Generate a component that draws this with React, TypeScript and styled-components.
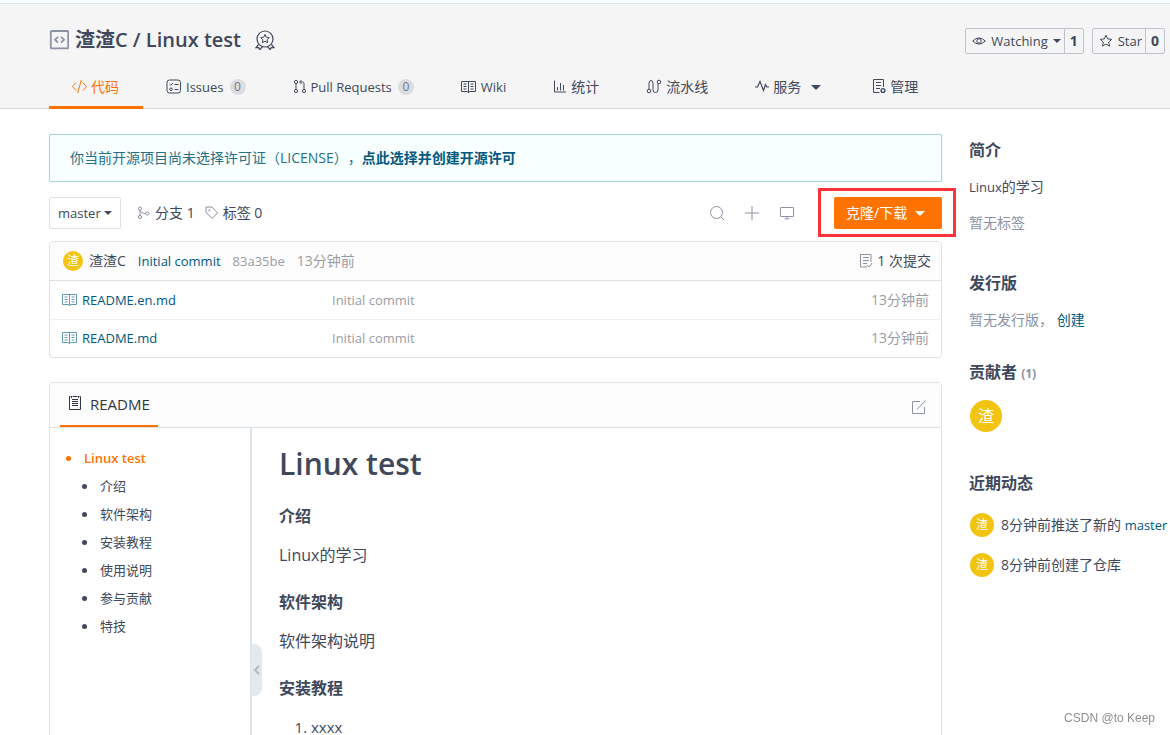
import React from "react";
import styled, { createGlobalStyle } from "styled-components";

const color = {
  text: "#40485b",
  muted: "#8c92a4",
  faint: "#9b9ca3",
  link: "#005980",
  orange: "#fe7300",
  line: "#dce3e8",
  softLine: "#eff2f5",
  panel: "#fcfcfc",
  yellow: "#f1c40f",
};

const GlobalStyle = createGlobalStyle`
  *, *::before, *::after { box-sizing: border-box; }
  html { scrollbar-width: none; }
  body {
    margin: 0;
    background: #fff;
    color: ${color.text};
    font-family: "Open Sans", "Noto Sans CJK SC", sans-serif;
    font-size: 14px;
    line-height: 24px;
    overflow-x: hidden;
    text-spacing-trim: space-all;
  }
  a { color: inherit; text-decoration: none; }
  button, select { font: inherit; color: inherit; }
  h1, h2, h3, p, ul, ol { margin: 0; padding: 0; }
`;

/* ---------- icons ---------- */

const Svg = styled.svg`
  flex: none;
  display: block;
  fill: none;
  stroke: currentColor;
  stroke-width: 1;
`;

type IconProps = { w?: number; h?: number; children?: React.ReactNode };
const Icon = ({ w = 16, h = 16, children }: IconProps) => (
  <Svg width={w} height={h} viewBox={`0 0 ${w} ${h}`} aria-hidden="true">
    {children}
  </Svg>
);

const RepoIcon = () => (
  <Icon w={20} h={20}>
    <rect x="1.800" y="1" width="17.400" height="17.400" rx="1" strokeWidth="1.800" />
    <path d="M9 6.800 6 9.700l3 2.900M12 6.800l3 2.900-3 2.900" strokeWidth="1.800" />
  </Icon>
);
const MedalIcon = () => (
  <Icon w={20} h={20}>
    <circle cx="10" cy="9" r="8" strokeWidth="1.200" />
    <path d="m10 4.500 1.300 2.700 3 .4-2.200 2.100.6 3-2.700-1.500-2.700 1.500.6-3-2.200-2.100 3-.4z" />
    <path d="M3.500 14.500 1 17.600l2.800-.1.900 2.200 3-3M16.500 14.500l2.500 3.100-2.800-.1-.9 2.200-3-3" strokeWidth="1.200" />
  </Icon>
);
const CodeIcon = () => (
  <Icon w={15}>
    <path d="M4 3.500.5 7.500l3.500 4M11 3.500l3.500 4-3.500 4M9.300 1 5.700 14" />
  </Icon>
);
const IssuesIcon = () => (
  <Icon>
    <rect x="1" y="1" width="13.500" height="13" rx="2.500" />
    <path d="m3.500 5 1.300 1.200L7 3.800M8.500 5.500h4M8.500 10.500h4" />
    <circle cx="5" cy="10.300" r="1.300" />
  </Icon>
);
const PullIcon = () => (
  <Icon w={14}>
    <circle cx="3" cy="3" r="1.600" />
    <circle cx="3" cy="12" r="1.600" />
    <circle cx="11" cy="12" r="1.600" />
    <path d="M3 4.600v5.800M11 10.400V4.500q0-1.500-1.500-1.500H7M8.500 1 6.500 3l2 2" />
  </Icon>
);
const BookIcon = () => (
  <Icon>
    <path d="M.5 2.500h14v10H9l-1.500 1-1.500-1H.5zM7.500 2.500v11M2.500 5h3M2.500 7.500h3M2.500 10h3M9.500 5h3M9.500 7.500h3M9.500 10h3" />
  </Icon>
);
const ChartIcon = () => (
  <Icon w={14}>
    <path d="M1.500 1.500v11.500H13M4.500 11.500V8M7.500 11.500V4M10.500 11.500V6" />
  </Icon>
);
const PipeIcon = () => (
  <Icon>
    <circle cx="3" cy="12" r="1.800" />
    <circle cx="13" cy="3" r="1.800" />
    <path d="M3 10.200V4q0-2.500 2-2.500T7 4v7q0 2.500 2.500 2.500T12 11V4.800" />
  </Icon>
);
const PulseIcon = () => (
  <Icon w={14}>
    <path d="M0 8h2.500L5 2.500l3.500 9 2-6L11.800 8H14" strokeWidth="1.200" />
  </Icon>
);
const ManageIcon = () => (
  <Icon w={14}>
    <path d="M11.500 8V.500h-10v13h6M4 3.500h5M4 6.500h5M4 9.500h4" />
    <circle cx="11" cy="11.500" r="1.900" strokeWidth="1.400" />
  </Icon>
);
const EyeIcon = () => (
  <Icon w={14} h={14}>
    <path d="M.7 7Q7 .8 13.300 7 7 13.200.7 7z" />
    <circle cx="7" cy="7" r="2.200" />
  </Icon>
);
const StarIcon = () => (
  <Icon w={14} h={14}>
    <path d="m7 1.200 1.700 3.700 4 .5-3 2.700.8 4L7 10.100l-3.500 2 .8-4-3-2.700 4-.5z" />
  </Icon>
);
const BranchIcon = () => (
  <Icon w={14} h={14}>
    <circle cx="3" cy="2.700" r="1.600" />
    <circle cx="3" cy="11" r="1.600" />
    <circle cx="10.500" cy="7.500" r="1.600" />
    <path d="M3 4.300v5.100M3 4.300q.6 3.200 5.900 3.200" />
  </Icon>
);
const TagIcon = () => (
  <Icon w={14} h={14}>
    <path d="M1 1h6l5.500 6L7.300 12.300 1 6.500z" />
    <circle cx="4.300" cy="4.300" r=".6" />
  </Icon>
);
const SearchIcon = () => (
  <Icon>
    <circle cx="7.500" cy="7.500" r="6" />
    <path d="m12 12 3 3" />
  </Icon>
);
const PlusIcon = () => (
  <Icon>
    <path d="M8 1v14M1 8h14" />
  </Icon>
);
const ScreenIcon = () => (
  <Icon>
    <rect x="1.500" y="2.500" width="13" height="9" rx=".5" />
    <path d="M8 11.500v2M5.500 13.800h5" />
  </Icon>
);
const LogIcon = () => (
  <Icon w={14}>
    <path d="M12 9V1.500H1.500v12.500H8M4 4.500h6M4 7.500h6M4 10.500h4M8 12l2.200 2L13 10" />
  </Icon>
);
const DocIcon = () => (
  <Icon w={14}>
    <path d="M2.500.5h-1v13h11V.5h-1M4.500.5h5M4 3.500h6M4 5.500h6M4 7.500h6M4 9.500h6M3.500 0v2M10.500 0v2" />
  </Icon>
);
const EditIcon = () => (
  <Icon>
    <path d="M9 2.500H1.500v12h12V8M6 10.500 14.500 1.500" />
  </Icon>
);
const ChevronIcon = () => (
  <Icon w={8} h={12}>
    <path d="M6 2 2 6l4 4" strokeWidth="2" />
  </Icon>
);

const Caret = styled.span`
  flex: none;
  border: 4px solid transparent;
  border-top-color: currentColor;
  border-bottom-width: 0;
`;
const WideCaret = styled(Caret)`
  border-width: 5px 5px 0;
  margin-left: 6px;
`;

/* Text in Latin letters runs one size below the Chinese text around it. */
const Latin = styled.span`
  font-size: 13px;
`;

/* ---------- header ---------- */

const TopStrip = styled.div`
  height: 4px;
  background: #f6ffff;
  border-bottom: 1px solid #dde6e8;
`;
const Header = styled.header`
  background: #f5f5f5;
  border-bottom: 1px solid #d9d9d9;
  padding: 19px 5px 0 49px;
`;
const TitleRow = styled.div`
  display: flex;
  align-items: center;
  justify-content: space-between;
  height: 34px;
`;
const Title = styled.h1`
  display: flex;
  align-items: center;
  gap: 6px;
  font-size: 20px;
  line-height: 32px;
  font-weight: 600;
  white-space: nowrap;
`;
const Tint = styled.span<{ $c: string }>`
  display: flex;
  color: ${(p) => p.$c};
`;
const MedalSlot = styled.span`
  display: flex;
  margin-left: 8px;
`;
const Actions = styled.div`
  display: flex;
  gap: 8px;
  margin-top: 2px;
`;
const ActionGroup = styled.div`
  display: flex;
  height: 26px;
  border: 1px solid #c0c4d0;
  border-radius: 2px;
`;
const ActionButton = styled.button`
  display: flex;
  align-items: center;
  gap: 5px;
  padding: 0 3px 0 6px;
  border: 0;
  background: none;
  font-size: 13px;
  white-space: nowrap;
`;
const ActionCount = styled.a`
  display: flex;
  align-items: center;
  justify-content: center;
  width: 19px;
  border-left: 1px solid #c0c4d0;
  font-weight: 700;
`;
const Tabs = styled.nav`
  display: flex;
  height: 44px;
  margin: 8px 0 -1px;
`;
const Tab = styled.a<{ $active?: boolean; $wide?: boolean }>`
  display: flex;
  align-items: center;
  gap: 4px;
  padding: 0 24px 0 23px;
  margin-right: ${(p) => (p.$wide ? 4 : 0)}px;
  white-space: nowrap;
  color: ${(p) => (p.$active ? color.orange : color.text)};
  box-shadow: ${(p) => (p.$active ? `inset 0 -3px ${color.orange}` : "none")};
`;
const Pill = styled.span`
  min-width: 16px;
  height: 16px;
  margin-left: 2px;
  border-radius: 8px;
  background: #dcdde0;
  color: #6b7a99;
  font-size: 12px;
  line-height: 16px;
  text-align: center;
`;

/* ---------- page ---------- */

const Columns = styled.div`
  display: flex;
  align-items: flex-start;
  gap: 27px;
  padding: 25px 0 0 49px;
`;
const Main = styled.main`
  flex: 1;
  min-width: 0;
`;
const Notice = styled.div`
  display: flex;
  align-items: center;
  height: 48px;
  padding: 0 20px;
  border: 1px solid #a9d5de;
  border-radius: 2px;
  background: #f8ffff;
  box-shadow: 0 0 1px #a9d5de;
  color: #276f86;
  white-space: nowrap;
`;
const NoticeLink = styled.a`
  color: ${color.link};
  font-weight: 700;
`;
const Toolbar = styled.div`
  display: flex;
  align-items: center;
  justify-content: space-between;
  margin: 15px 0 12px;
`;
const ToolGroup = styled.div<{ $gap: number }>`
  display: flex;
  align-items: center;
  gap: ${(p) => p.$gap}px;
`;
const BranchBox = styled.label`
  display: grid;
  align-items: center;
  width: 72px;
  height: 32px;
  margin-right: 6px;
  border: 1px solid ${color.line};
  border-radius: 2px;
  > * { grid-area: 1 / 1; }
  > span { justify-self: end; margin-right: 8px; pointer-events: none; }
`;
const BranchSelect = styled.select`
  appearance: none;
  width: 100%;
  height: 30px;
  padding: 0 8px;
  border: 0;
  background: none;
  font-size: 13px;
`;
const IconLink = styled.a`
  display: flex;
  align-items: center;
  gap: 4px;
  white-space: nowrap;
`;
const ToolButton = styled.button`
  display: flex;
  padding: 0;
  border: 0;
  background: none;
  color: ${color.muted};
`;
const CloneSlot = styled.div`
  position: relative;
  margin-left: 20px;
  &::after {
    content: "";
    position: absolute;
    inset: -9px -14px -8px -16px;
    border: 3px solid #fb3338;
    pointer-events: none;
  }
`;
const CloneButton = styled.button`
  display: flex;
  align-items: center;
  justify-content: space-between;
  width: 108px;
  height: 32px;
  padding: 0 17px 0 12px;
  border: 0;
  border-radius: 2px;
  background: ${color.orange};
  color: #fff;
`;
const Panel = styled.section`
  border: 1px solid ${color.line};
  border-radius: 4px;
  overflow: hidden;
`;
const CommitBar = styled.div`
  display: flex;
  align-items: center;
  height: 39px;
  padding: 0 10px 0 13px;
  gap: 12px;
  background: ${color.panel};
  border-bottom: 1px solid ${color.line};
  white-space: nowrap;
`;
const Author = styled.a`
  display: flex;
  align-items: center;
  gap: 6px;
`;
const PlainLink = styled.a`
  color: ${color.link};
`;
const LatinLink = styled(PlainLink)`
  font-size: 13px;
`;
const Faint = styled.span`
  color: ${color.faint};
`;
const FaintLatin = styled(Faint)`
  font-size: 13px;
`;
const PushRight = styled.div`
  margin-left: auto;
`;
const Avatar = styled.span<{ $size: number }>`
  flex: none;
  width: ${(p) => p.$size}px;
  height: ${(p) => p.$size}px;
  border-radius: 50%;
  background: ${color.yellow};
  color: #fff;
  font-size: ${(p) => (p.$size > 24 ? 16 : 12)}px;
  line-height: ${(p) => p.$size}px;
  text-align: center;
`;
const FileTable = styled.table`
  width: 100%;
  border-collapse: collapse;
  table-layout: fixed;
  td {
    height: 38px;
    padding: 0 12px;
    color: ${color.faint};
  }
  td:first-child { width: 282px; padding-right: 0; font-size: 13px; }
  td:nth-child(2) { padding-left: 0; font-size: 13px; }
  td:last-child { width: 120px; text-align: right; }
  tr + tr td { border-top: 1px solid ${color.softLine}; }
`;
const FileLink = styled(IconLink)`
  color: ${color.link};
  svg { opacity: 0.6; }
`;
const ReadmePanel = styled(Panel)`
  margin-top: 24px;
`;
const ReadmeBar = styled.div`
  display: flex;
  align-items: center;
  justify-content: space-between;
  height: 45px;
  padding: 4px 14px 0 10px;
  background: ${color.panel};
  border-bottom: 1px solid ${color.line};
`;
const ReadmeTitle = styled.h2`
  display: flex;
  align-items: center;
  gap: 8px;
  height: 40px;
  padding: 0 8px 4px;
  border-bottom: 2px solid ${color.orange};
  color: #303643;
  font-size: 15px;
  font-weight: 400;
`;
const ReadmeBody = styled.div`
  display: flex;
  min-height: 400px;
`;
const Toc = styled.nav`
  position: relative;
  flex: none;
  width: 202px;
  padding: 16px 0 0 16px;
  border-right: 2px solid ${color.line};
  font-size: 13px;
  line-height: 28px;
  ul { list-style: none; }
  ul ul { padding-left: 16px; }
`;
const TocLink = styled.a<{ $current?: boolean }>`
  display: flex;
  align-items: center;
  gap: 13px;
  height: 28px;
  color: ${(p) => (p.$current ? color.orange : color.text)};
  font-weight: ${(p) => (p.$current ? 600 : 400)};
  &::before {
    content: "";
    width: 5px;
    height: 5px;
    border-radius: 50%;
    background: currentColor;
  }
`;
const TocToggle = styled.button`
  position: absolute;
  top: 216px;
  right: -12px;
  display: flex;
  align-items: center;
  justify-content: center;
  width: 11px;
  height: 52px;
  padding: 0;
  border: 0;
  border-radius: 0 8px 8px 0;
  background: #e3e9ed;
  color: #b3b9c5;
`;
const Article = styled.article`
  flex: 1;
  padding: 16px 27px 40px;
  font-size: 16px;
  h1 { font-size: 30px; line-height: 40px; font-weight: 600; margin-bottom: 20px; }
  h3 { font-size: 16px; line-height: 24px; font-weight: 700; }
  p { line-height: 24px; margin: 15px 0 23px; }
  ol { padding-left: 32px; margin-top: 15px; font-size: 15px; }
`;

/* ---------- sidebar ---------- */

const Side = styled.aside`
  flex: none;
  width: 201px;
  padding-top: 4px;
  white-space: nowrap;
`;
const SideBlock = styled.section<{ $space: number }>`
  margin-bottom: ${(p) => p.$space}px;
  h3 { font-size: 16px; line-height: 24px; margin-bottom: 13px; }
  p + p { margin-top: 12px; }
  small { font-size: 12px; color: ${color.muted}; }
`;
const Muted = styled.p`
  color: ${color.muted};
`;
const AvatarRow = styled.div`
  display: flex;
  padding: 1px 0 0 1px;
`;
const Events = styled.div`
  display: grid;
  gap: 16px;
  padding: 5px 0 0 1px;
`;
const Event = styled.div`
  display: flex;
  align-items: center;
  gap: 7px;
`;
const Watermark = styled.div`
  position: fixed;
  right: 15px;
  bottom: 5px;
  color: #8f8f8f;
  font: 12px/24px "Liberation Sans", Arial, sans-serif;
`;

const files = ["README.en.md", "README.md"];
const sections = ["介绍", "软件架构", "安装教程", "使用说明", "参与贡献", "特技"];

export default function App() {
  return (
    <>
      <GlobalStyle />
      <TopStrip />
      <Header>
        <TitleRow>
          <Title>
            <Tint $c={color.muted}><RepoIcon /></Tint>
            <a href="#repo">渣渣C / Linux test</a>
            <MedalSlot><MedalIcon /></MedalSlot>
          </Title>
          <Actions>
            <ActionGroup>
              <ActionButton type="button"><EyeIcon />Watching<Caret /></ActionButton>
              <ActionCount href="#watchers">1</ActionCount>
            </ActionGroup>
            <ActionGroup>
              <ActionButton type="button"><StarIcon />Star</ActionButton>
              <ActionCount href="#stars">0</ActionCount>
            </ActionGroup>
          </Actions>
        </TitleRow>
        <Tabs>
          <Tab href="#code" $active><CodeIcon />代码</Tab>
          <Tab href="#issues"><IssuesIcon /><Latin>Issues</Latin><Pill>0</Pill></Tab>
          <Tab href="#pulls"><PullIcon /><Latin>Pull Requests</Latin><Pill>0</Pill></Tab>
          <Tab href="#wiki"><BookIcon /><Latin>Wiki</Latin></Tab>
          <Tab href="#stats"><ChartIcon />统计</Tab>
          <Tab href="#pipelines"><PipeIcon />流水线</Tab>
          <Tab href="#services" $wide><PulseIcon />服务<WideCaret /></Tab>
          <Tab href="#manage"><ManageIcon />管理</Tab>
        </Tabs>
      </Header>

      <Columns>
        <Main>
          <Notice>
            你当前开源项目尚未选择许可证（LICENSE），
            <NoticeLink href="#license">点此选择并创建开源许可</NoticeLink>
          </Notice>

          <Toolbar>
            <ToolGroup $gap={10}>
              <BranchBox>
                <BranchSelect aria-label="分支" defaultValue="master">
                  <option>master</option>
                </BranchSelect>
                <Caret />
              </BranchBox>
              <IconLink href="#branches"><Tint $c={color.muted}><BranchIcon /></Tint>分支 1</IconLink>
              <IconLink href="#tags"><Tint $c={color.muted}><TagIcon /></Tint>标签 0</IconLink>
            </ToolGroup>
            <ToolGroup $gap={19}>
              <ToolButton type="button" aria-label="搜索"><SearchIcon /></ToolButton>
              <ToolButton type="button" aria-label="新建"><PlusIcon /></ToolButton>
              <ToolButton type="button" aria-label="Web IDE"><ScreenIcon /></ToolButton>
              <CloneSlot>
                <CloneButton type="button">克隆/下载<WideCaret /></CloneButton>
              </CloneSlot>
            </ToolGroup>
          </Toolbar>

          <Panel>
            <CommitBar>
              <Author href="#user"><Avatar $size={20}>渣</Avatar>渣渣C</Author>
              <LatinLink href="#commit">Initial commit</LatinLink>
              <FaintLatin>83a35be</FaintLatin>
              <Faint>13分钟前</Faint>
              <PushRight>
                <IconLink href="#commits"><Tint $c={color.muted}><LogIcon /></Tint>1 次提交</IconLink>
              </PushRight>
            </CommitBar>
            <FileTable>
              <tbody>
                {files.map((name) => (
                  <tr key={name}>
                    <td><FileLink href={`#${name}`}><BookIcon />{name}</FileLink></td>
                    <td>Initial commit</td>
                    <td>13分钟前</td>
                  </tr>
                ))}
              </tbody>
            </FileTable>
          </Panel>

          <ReadmePanel>
            <ReadmeBar>
              <ReadmeTitle><DocIcon />README</ReadmeTitle>
              <ToolButton type="button" aria-label="编辑"><EditIcon /></ToolButton>
            </ReadmeBar>
            <ReadmeBody>
              <Toc>
                <ul>
                  <li>
                    <TocLink href="#top" $current>Linux test</TocLink>
                    <ul>
                      {sections.map((s) => (
                        <li key={s}><TocLink href={`#${s}`}>{s}</TocLink></li>
                      ))}
                    </ul>
                  </li>
                </ul>
                <TocToggle type="button" aria-label="收起目录"><ChevronIcon /></TocToggle>
              </Toc>
              <Article>
                <h1>Linux test</h1>
                <h3>介绍</h3>
                <p>Linux的学习</p>
                <h3>软件架构</h3>
                <p>软件架构说明</p>
                <h3>安装教程</h3>
                <ol>
                  <li>xxxx</li>
                </ol>
              </Article>
            </ReadmeBody>
          </ReadmePanel>
        </Main>

        <Side>
          <SideBlock $space={36}>
            <h3>简介</h3>
            <p><Latin>Linux</Latin>的学习</p>
            <Muted>暂无标签</Muted>
          </SideBlock>
          <SideBlock $space={28}>
            <h3>发行版</h3>
            <Muted>暂无发行版， <PlainLink href="#new-release">创建</PlainLink></Muted>
          </SideBlock>
          <SideBlock $space={39}>
            <h3>贡献者 <small>(1)</small></h3>
            <AvatarRow><Avatar $size={32}>渣</Avatar></AvatarRow>
          </SideBlock>
          <SideBlock $space={0}>
            <h3>近期动态</h3>
            <Events>
              <Event><Avatar $size={24}>渣</Avatar><span>8分钟前推送了新的 <LatinLink href="#master">master</LatinLink></span></Event>
              <Event><Avatar $size={24}>渣</Avatar><span>8分钟前创建了仓库</span></Event>
            </Events>
          </SideBlock>
        </Side>
      </Columns>
      <Watermark>CSDN @to Keep</Watermark>
    </>
  );
}
